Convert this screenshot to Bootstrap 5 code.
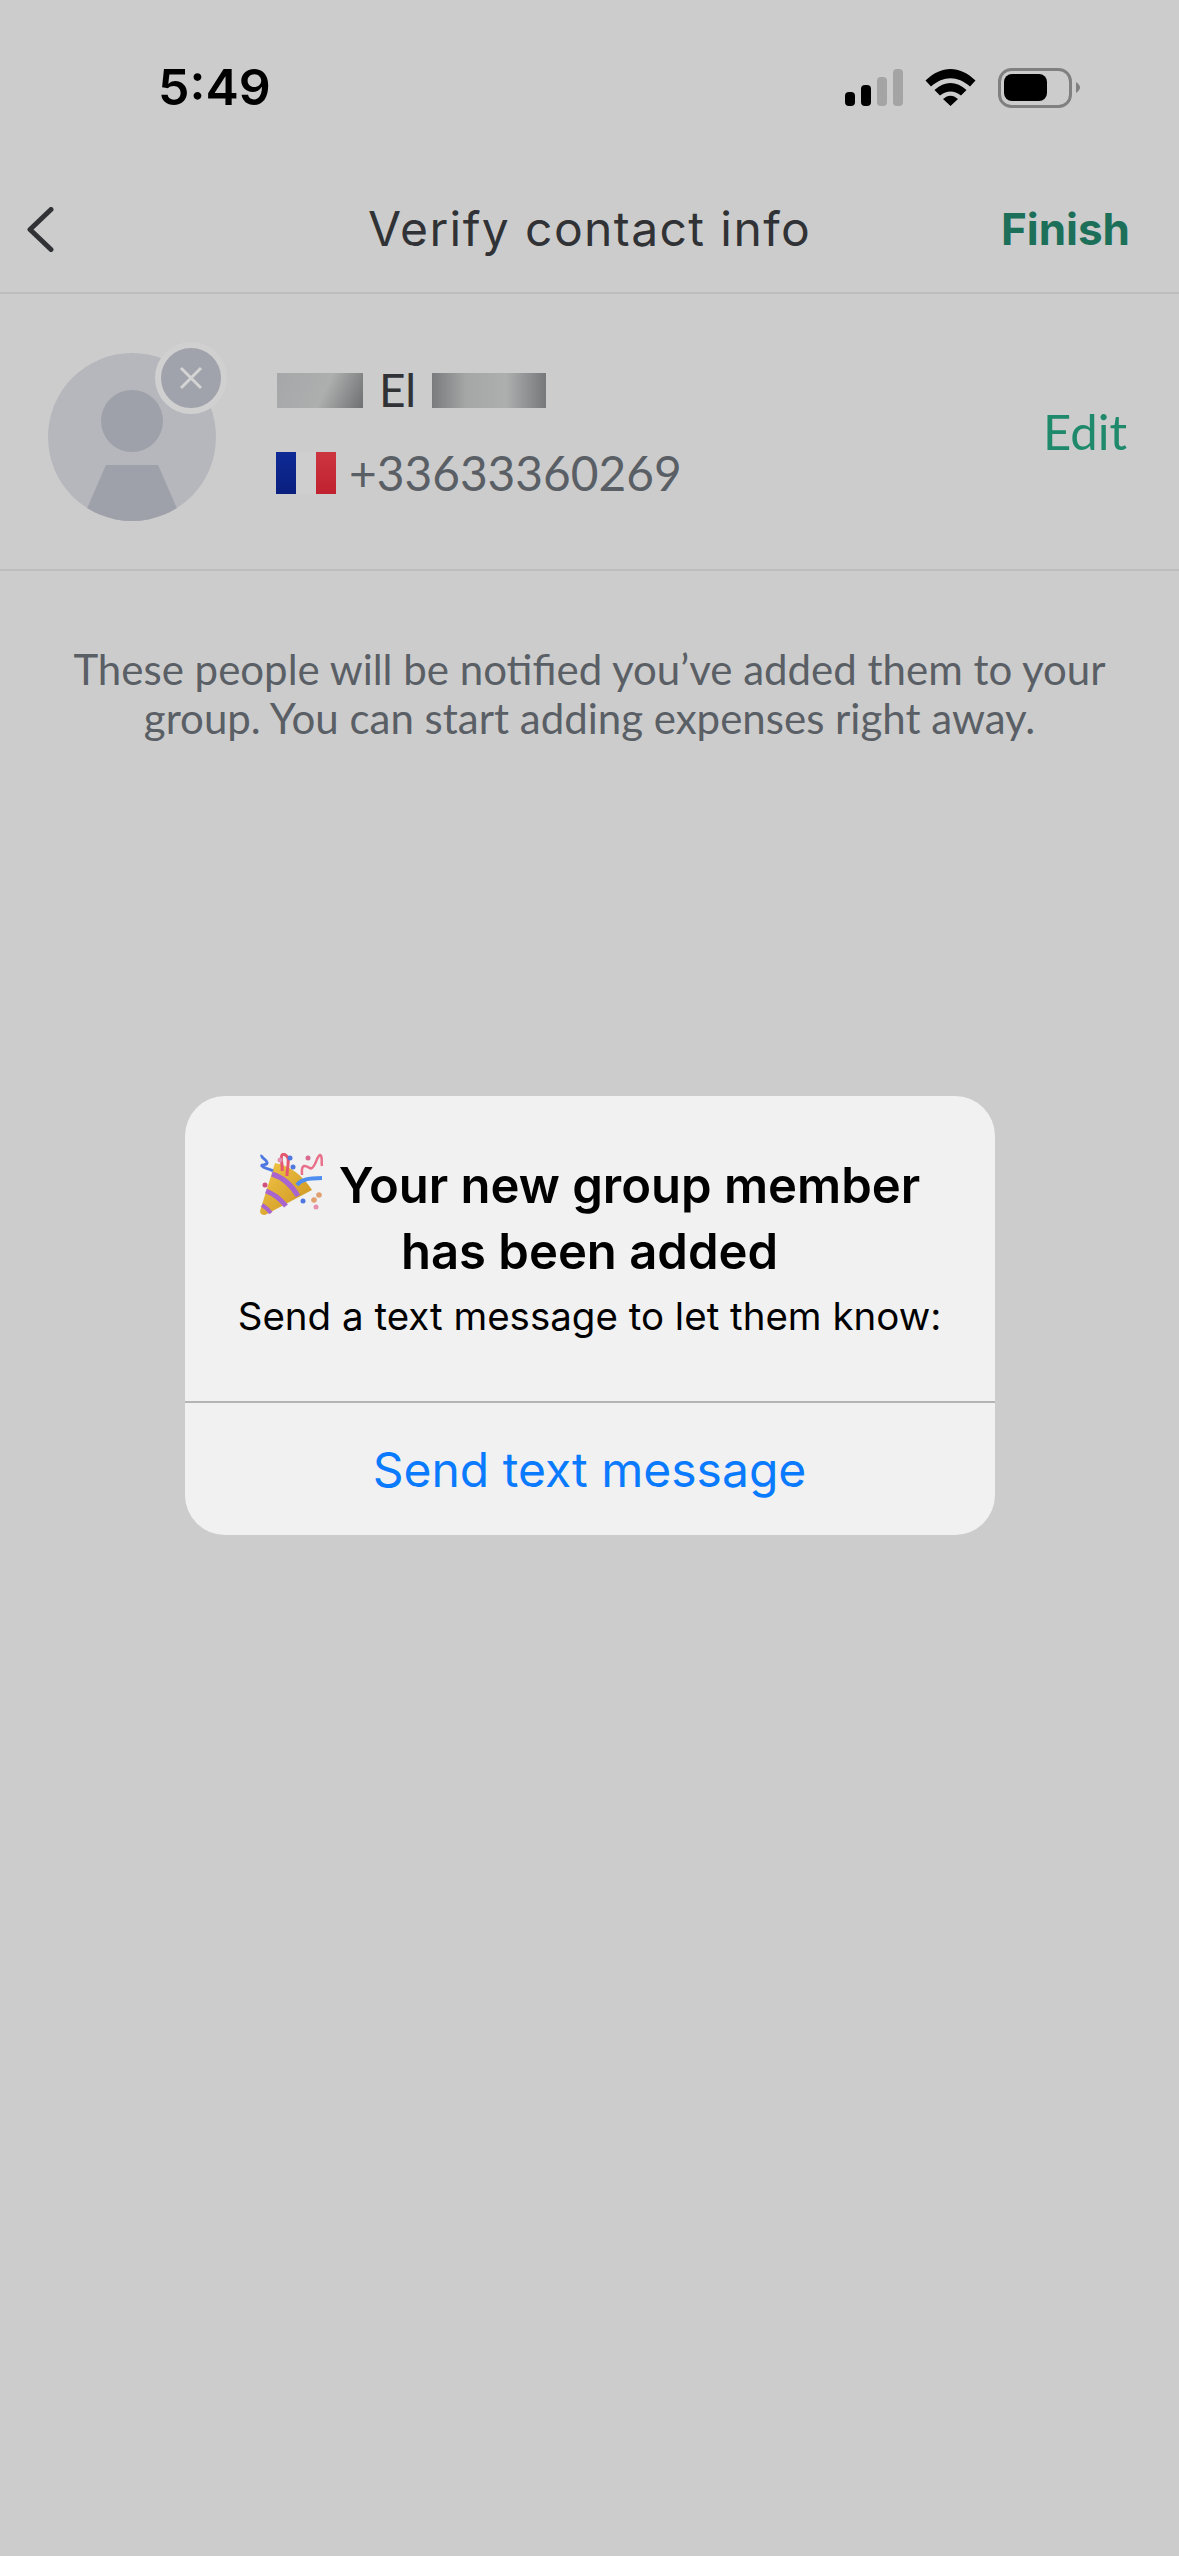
<!DOCTYPE html>
<html lang="en">
<head>
    <meta charset="UTF-8">
    <title>Verify contact info</title>
    <link href="https://cdn.jsdelivr.net/npm/bootstrap@5.3.0/dist/css/bootstrap.min.css" rel="stylesheet">
    <style>
        body {
            background-color: #cccccc;
            width: 1179px;
            height: 2556px;
            overflow: hidden;
        }
        .status-bar {
            height: 174px;
            padding: 57px 98px 0 158px;
        }
        .status-time {
            font-family: Inter, sans-serif;
            font-weight: 600;
            font-size: 50px;
            line-height: 60px;
            color: #000;
        }
        .status-icons {
            margin-top: 11px;
        }
        .top-bar {
            height: 120px;
            padding: 0 49px 8px 27px;
            border-bottom: 2px solid #bdbdbd;
        }
        .top-title {
            font-family: Inter, sans-serif;
            font-weight: 400;
            font-size: 48px;
            letter-spacing: 1.4px;
            color: #303235;
            left: 0;
            right: 0;
        }
        .top-finish {
            font-family: Inter, sans-serif;
            font-weight: 700;
            font-size: 44px;
            color: #1c6f58;
        }
        .contact-row {
            height: 277px;
            padding: 0 52px 0 48px;
            border-bottom: 2px solid #bdbdbd;
        }
        .avatar-wrap {
            width: 168px;
            height: 168px;
            margin-top: 10px;
            margin-right: 60px;
        }
        .remove-badge {
            width: 72px;
            height: 72px;
            top: -11px;
            right: -11px;
            background-color: #a0a3ab;
            border: 6px solid #d0d0d0;
        }
        .contact-name,
        .contact-phone,
        .edit-link,
        .notice {
            font-family: Lato, sans-serif;
        }
        .contact-name {
            font-size: 46px;
            line-height: 56px;
            color: #303235;
            padding-left: 1px;
            margin-bottom: 27px;
        }
        .blur-a {
            width: 86px;
            height: 35px;
            background: linear-gradient(115deg, #a6a7a8 0%, #adaeae 55%, #6f7071 100%);
        }
        .blur-b {
            width: 114px;
            height: 35px;
            background: linear-gradient(90deg, #7a7b7c 0%, #a5a6a6 30%, #adaeae 65%, #77787a 100%);
        }
        .contact-phone {
            font-size: 47.800px;
            line-height: 56px;
            color: #5a5f66;
        }
        .flag {
            width: 60px;
            height: 42px;
            margin-right: 13px;
        }
        .flag-blue { background: linear-gradient(#0d2a96, #0a1f7e); }
        .flag-white { background-color: #cfcfcf; }
        .flag-red { background: linear-gradient(#cc3540, #c0212f); }
        .edit-link {
            font-size: 49px;
            color: #1f8a6b;
        }
        .notice {
            font-size: 42px;
            line-height: 49px;
            color: #5a5f66;
            padding-top: 74px;
        }
        .alert-layer {
            top: 1096px;
            left: 0;
            right: 0;
        }
        .alert-box {
            width: 810px;
            height: 439px;
            background-color: #f1f1f1;
            border-radius: 40px;
            font-family: Inter, sans-serif;
        }
        .alert-body {
            height: 307px;
            padding-top: 57px;
            border-bottom: 2px solid #b4b4b4;
        }
        .alert-title {
            font-weight: 600;
            font-size: 49px;
            line-height: 66px;
            color: #000;
        }
        .alert-text {
            font-size: 38.500px;
            line-height: 46px;
            margin-top: 8px;
            color: #000;
        }
        .alert-action {
            height: 131px;
            padding-top: 3px;
            font-size: 48px;
            color: #0a7aff;
        }
        .popper {
            width: 66px;
            height: 64px;
            margin-right: 14px;
            vertical-align: -14px;
        }
    </style>
</head>
<body>
    <div class="status-bar d-flex justify-content-between align-items-start">
        <div class="status-time">5:49</div>
        <svg class="status-icons" width="236" height="40" viewBox="846 68 236 40">
            <rect x="846" y="92" width="10" height="14" rx="4" fill="#000"/>
            <rect x="862" y="85" width="10" height="21" rx="4" fill="#000"/>
            <rect x="878" y="77" width="10" height="29" rx="4" fill="#a4a4a4"/>
            <rect x="894" y="69" width="10" height="37" rx="4" fill="#a4a4a4"/>
            <path d="M926.500 80.500C942 65 961 65 976.500 80.500L971 86.500C958.500 75.500 944.500 75.500 932 86.500Z" fill="#000"/>
            <path d="M935.500 90C945.500 80.500 957.500 80.500 967.500 90L962 95.500C955 90 948 90 941 95.500Z" fill="#000"/>
            <path d="M944 99C949 94.500 954 94.500 959 99L951.500 106Z" fill="#000"/>
            <rect x="1000.500" y="69.500" width="71" height="37" rx="12" fill="none" stroke="#808080" stroke-width="3"/>
            <rect x="1005" y="74" width="43" height="27" rx="8" fill="#000"/>
            <path d="M1077 82C1080 84 1081 86 1081 87.500C1081 89 1080 91 1077 93Z" fill="#808080"/>
        </svg>
    </div>

    <div class="top-bar d-flex justify-content-between align-items-center position-relative">
        <svg width="27" height="45" viewBox="0 0 27 45">
            <path d="M24 2.500L3 22.500L24 42.500" fill="none" stroke="#303235" stroke-width="5" stroke-linecap="round" stroke-linejoin="round"/>
        </svg>
        <div class="top-title position-absolute text-center">Verify contact info</div>
        <div class="top-finish">Finish</div>
    </div>

    <div class="contact-row d-flex align-items-center">
        <div class="avatar-wrap position-relative flex-shrink-0">
            <svg width="168" height="168" viewBox="0 0 168 168">
                <defs>
                    <clipPath id="avatarClip"><circle cx="84" cy="84" r="84"/></clipPath>
                </defs>
                <circle cx="84" cy="84" r="84" fill="#b6b7bc"/>
                <ellipse cx="84" cy="68" rx="31" ry="31" fill="#9ea1a9"/>
                <path d="M58 112H110L144 190H24Z" fill="#9ea1a9" clip-path="url(#avatarClip)"/>
            </svg>
            <div class="remove-badge position-absolute rounded-circle d-flex align-items-center justify-content-center">
                <svg width="24" height="24" viewBox="0 0 24 24">
                    <path d="M2 2L22 22M22 2L2 22" stroke="#d4d4d4" stroke-width="3"/>
                </svg>
            </div>
        </div>
        <div class="flex-grow-1">
            <div class="contact-name d-flex align-items-center gap-3">
                <span class="blur-a"></span>
                <span>El</span>
                <span class="blur-b"></span>
            </div>
            <div class="contact-phone d-flex align-items-center">
                <span class="flag d-flex">
                    <span class="flag-blue flex-fill"></span>
                    <span class="flag-white flex-fill"></span>
                    <span class="flag-red flex-fill"></span>
                </span>
                <span>+33633360269</span>
            </div>
        </div>
        <div class="edit-link">Edit</div>
    </div>

    <div class="notice text-center">
        These people will be notified you’ve added them to your<br>
        group. You can start adding expenses right away.
    </div>

    <div class="alert-layer position-absolute d-flex justify-content-center">
        <div class="alert-box">
            <div class="alert-body text-center">
                <div class="alert-title">
                    <svg class="popper" viewBox="0 0 66 64">
                        <defs>
                            <linearGradient id="coneGold" x1="0" y1="0" x2="1" y2="1">
                                <stop offset="0" stop-color="#f3c948"/>
                                <stop offset="1" stop-color="#c98f1e"/>
                            </linearGradient>
                        </defs>
                        <path d="M1 58L16 10Q38 14 53 37L6 62Q1 62 1 58Z" fill="url(#coneGold)"/>
                        <path d="M13 21Q29 26 39 43" fill="none" stroke="#a865d0" stroke-width="5"/>
                        <path d="M7 38Q18 42 27 53" fill="none" stroke="#a865d0" stroke-width="5"/>
                        <path d="M3 52Q8 55 12 60" fill="none" stroke="#a865d0" stroke-width="4"/>
                        <path d="M3 2C1 5 9 7 8 10C7 13 2 11 3 13C5 16 10 15 14 18" fill="none" stroke="#4e78e0" stroke-width="3"/>
                        <path d="M23 18C24 12 21 5 23 2C25 0 28 3 29 5C30 10 28 16 28 23" fill="none" stroke="#e5566f" stroke-width="3"/>
                        <path d="M43 22C43 18 42 14 45 13C49 12 50 17 53 15C57 12 58 3 61 2C64 3 62 9 63 13" fill="none" stroke="#e8708a" stroke-width="2.500"/>
                        <path d="M38 32C42 27 48 25 63 25" fill="none" stroke="#4e8ef0" stroke-width="4"/>
                        <circle cx="31" cy="5" r="2.500" fill="#4e78e0"/>
                        <circle cx="34" cy="14" r="2.500" fill="#4e78e0"/>
                        <circle cx="21" cy="7" r="2.500" fill="#e090b0"/>
                        <circle cx="49" cy="5" r="2.500" fill="#d86a90"/>
                        <circle cx="6" cy="32" r="2.500" fill="#d05080"/>
                        <circle cx="60" cy="42" r="2.800" fill="#e0a070"/>
                        <circle cx="55" cy="47" r="2.800" fill="#e0a070"/>
                        <circle cx="57" cy="54" r="2.500" fill="#e890b0"/>
                        <circle cx="44" cy="48" r="2.500" fill="#4e78e0"/>
                    </svg>Your new group member<br>has been added
                </div>
                <div class="alert-text">Send a text message to let them know:</div>
            </div>
            <div class="alert-action d-flex align-items-center justify-content-center">Send text message</div>
        </div>
    </div>

    <script src="https://cdn.jsdelivr.net/npm/bootstrap@5.3.0/dist/js/bootstrap.bundle.min.js"></script>
</body>
</html>
